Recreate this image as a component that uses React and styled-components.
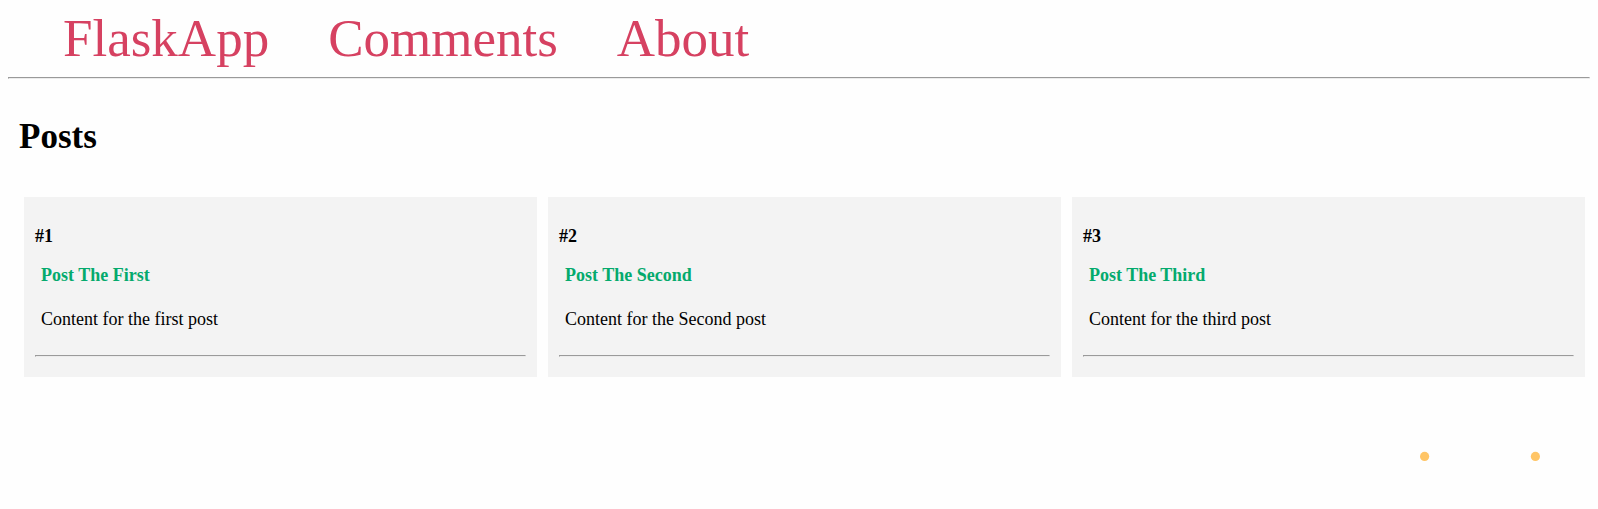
import React from "react";
import styled, { createGlobalStyle } from "styled-components";

const GlobalStyle = createGlobalStyle`
  body {
    margin: 8px;
    background: #fefefe;
    color: #000;
    font-family: "Liberation Serif", "Times New Roman", serif;
    font-size: 18px;
    line-height: 20px;
  }
`;

const Nav = styled.nav`
  display: flex;
  flex-wrap: wrap;
  gap: 0 59px;
  padding-left: 55px;
`;

const NavLink = styled.a`
  color: #d64161;
  font-size: 53px;
  line-height: 60px;
  text-decoration: none;
`;

const Divider = styled.hr`
  margin: ${({ $flush }) => ($flush ? "0" : "9px 0 0")};
  border: 1px solid;
  border-color: #9a9a9a #ececec #ececec #9a9a9a;
`;

const Content = styled.main`
  padding: 38px 5px 0 11px;
`;

const PageTitle = styled.h1`
  margin: 0 0 40px;
  font-size: 35px;
  line-height: 40px;
`;

const PostGrid = styled.div`
  display: grid;
  grid-template-columns: repeat(auto-fit, minmax(300px, 1fr));
  gap: 11px;
  padding-left: 5px;
`;

const PostCard = styled.article`
  padding: 29px 11px 20px;
  background: #f3f3f3;
`;

const PostNumber = styled.p`
  margin: 0 0 19px;
  font-weight: bold;
`;

const PostTitle = styled.h2`
  margin: 0 0 24px;
  padding: 0 6px;
  color: #04aa6d;
  font-size: 18px;
  line-height: 20px;
`;

const PostBody = styled.p`
  margin: 0 0 26px;
  padding: 0 6px;
`;

const Footer = styled.footer`
  display: flex;
  justify-content: flex-end;
  padding: 74px 44px 0 0;
`;

const links = ["FlaskApp", "Comments", "About"];

const posts = [
  { id: 1, title: "Post The First", body: "Content for the first post" },
  { id: 2, title: "Post The Second", body: "Content for the Second post" },
  { id: 3, title: "Post The Third", body: "Content for the third post" },
];

export default function App() {
  return (
    <>
      <GlobalStyle />
      <header>
        <Nav>
          {links.map((label) => (
            <NavLink key={label} href={`#${label.toLowerCase()}`}>
              {label}
            </NavLink>
          ))}
        </Nav>
        <Divider />
      </header>
      <Content>
        <PageTitle>Posts</PageTitle>
        <PostGrid>
          {posts.map((post) => (
            <PostCard key={post.id}>
              <PostNumber>#{post.id}</PostNumber>
              <PostTitle>{post.title}</PostTitle>
              <PostBody>{post.body}</PostBody>
              <Divider $flush />
            </PostCard>
          ))}
        </PostGrid>
      </Content>
      <Footer>
        <svg width="126" height="10" viewBox="0 0 126 10" aria-hidden="true">
          <circle cx="4.6" cy="5.4" r="4.6" fill="#ffc566" />
          <circle cx="115.4" cy="5.4" r="4.6" fill="#ffc566" />
        </svg>
      </Footer>
    </>
  );
}
